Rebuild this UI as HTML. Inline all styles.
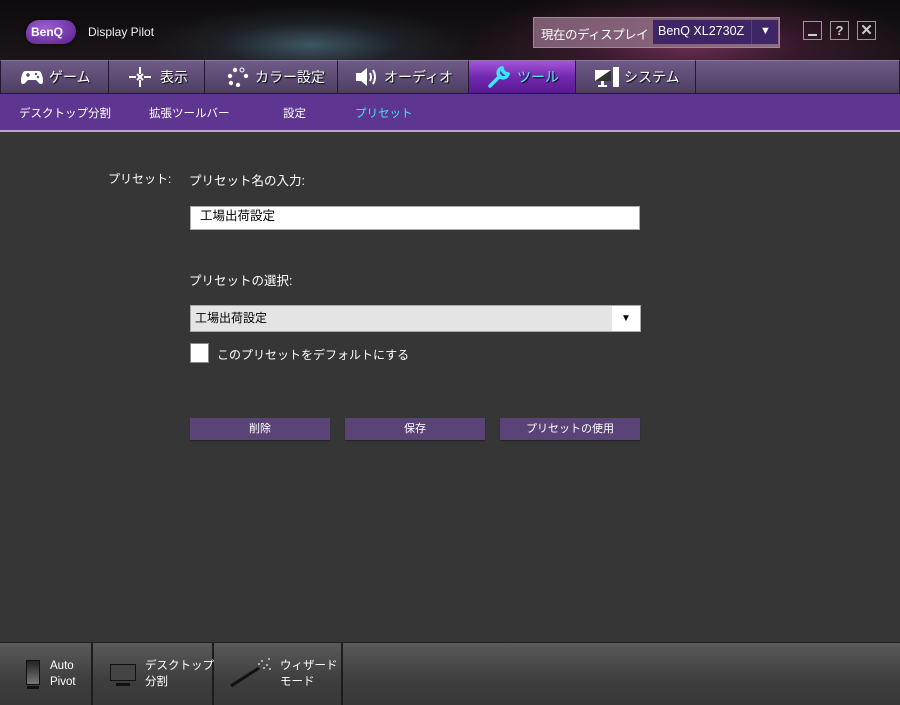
<!DOCTYPE html>
<html><head><meta charset="utf-8"><style>
*{margin:0;padding:0;box-sizing:border-box}
body{width:900px;height:705px;overflow:hidden;background:#363636;font-family:"Liberation Sans","Noto Sans CJK JP",sans-serif;color:#fff;position:relative}
.abs{position:absolute;white-space:nowrap}
#hdr{left:0;top:0;width:900px;height:60px;background:radial-gradient(ellipse 220px 60px at 690px 45px,#6a2d52 0%,rgba(80,30,60,.5) 50%,rgba(0,0,0,0) 100%),radial-gradient(ellipse 160px 40px at 310px 45px,#3d5563 0%,rgba(40,55,65,.4) 55%,rgba(0,0,0,0) 100%),linear-gradient(#0d0b0d,#1c1519)}
.tab{top:60px;height:34px;background:linear-gradient(#6e5b86,#4d3d63);border:1px solid #24182f;border-top:1px solid #8a78a0;font-size:14px;display:flex;align-items:center;color:#fff;text-shadow:1px 1px 1px #000}
.tab.act{background:linear-gradient(#a455d6,#7128b0 50%,#5a1a8e);color:#4ef0ff}
#sub{left:0;top:94px;width:900px;height:38px;background:#5e3590;border-bottom:2px solid #b9a4da;font-size:11.5px}
#sub span{position:absolute;top:11px}
.btn{top:418px;height:22px;width:140px;background:#5a4377;font-size:11px;text-align:center;line-height:22px;box-shadow:0 1px 1px #222}
#bot{left:0;top:642px;width:900px;height:63px;background:linear-gradient(#5a5a5a,#3e3e3e 60%,#383838);border-top:1px solid #222}
.seg{top:643px;height:62px;border-right:2px solid #1c1c1c;font-size:11.5px;line-height:16px}
</style></head><body>
<div id="hdr" class="abs"></div>
<div class="abs" style="left:26px;top:20px;width:50px;height:24px;border-radius:14px 12px 14px 10px;background:radial-gradient(ellipse at 40% 30%,#9a5ed0,#5a1e8e);box-shadow:0 0 3px #000"></div>
<div class="abs" style="left:31px;top:25px;font-size:12px;font-weight:bold;color:#fff">BenQ</div>
<div class="abs" style="left:88px;top:25px;font-size:12px;color:#eee">Display Pilot</div>
<div class="abs" style="left:533px;top:17px;width:247px;height:31px;background:linear-gradient(90deg,#7c5a70,#8e6a80);border:1px solid #9a8a96"></div>
<div class="abs" style="left:541px;top:24px;font-size:12.5px;letter-spacing:-0.5px;color:#fff">現在のディスプレイ</div>
<div class="abs" style="left:653px;top:20px;width:125px;height:24px;background:#3d2566"></div>
<div class="abs" style="left:751px;top:20px;width:1px;height:24px;background:#55407a"></div>
<div class="abs" style="left:658px;top:24px;font-size:12.5px">BenQ XL2730Z</div>
<div class="abs" style="left:760px;top:25px;font-size:11px">▼</div>
<div class="abs" style="left:803px;top:21px;width:19px;height:19px;border:1px solid #999;"><div class="abs" style="left:4px;top:12px;width:9px;height:2px;background:#ccc"></div></div>
<div class="abs" style="left:830px;top:21px;width:19px;height:19px;border:1px solid #999;font-size:13px;font-weight:bold;text-align:center;color:#ccc;line-height:17px">?</div>
<div class="abs" style="left:857px;top:21px;width:19px;height:19px;border:1px solid #999;font-size:15px;font-weight:bold;text-align:center;color:#ccc;line-height:17px">✕</div>

<div class="abs tab" style="left:0;width:109px;padding-left:20px"><svg width="22" height="18" viewBox="0 0 22 18"><path d="M4 3h14c2 0 4 5 4 10 0 4-3 4-5 1l-2-2H7l-2 2c-2 3-5 3-5-1 0-5 2-10 4-10z" fill="#fff"/><path d="M5 7h4M7 5v4" stroke="#555" stroke-width="1.6"/><circle cx="15" cy="6" r="1.2" fill="#555"/><circle cx="17" cy="9" r="1.2" fill="#555"/></svg><span style="margin-left:6px">ゲーム</span></div>
<div class="abs tab" style="left:108px;width:97px;padding-left:19px"><svg width="24" height="22"><g stroke="#fff" stroke-width="2" fill="none"><path d="M12 1v7M12 14v7M1 11h7M16 11h7M9 8l3 3 3-3M9 14l3-3 3 3"/></g></svg><span style="margin-left:8px">表示</span></div>
<div class="abs tab" style="left:204px;width:134px;padding-left:22px"><svg width="22" height="20"><g fill="#fff"><circle cx="8" cy="3" r="2.2"/><circle cx="15" cy="3" r="2" fill="none" stroke="#fff"/><circle cx="3" cy="9" r="2.2"/><circle cx="19" cy="9" r="2.2"/><circle cx="4" cy="16" r="2.2"/><circle cx="11" cy="18" r="2.2"/></g></svg><span style="margin-left:6px">カラー設定</span></div>
<div class="abs tab" style="left:337px;width:132px;padding-left:17px"><svg width="24" height="20"><path d="M1 6h5l6-5v18l-6-5H1z" fill="#fff"/><path d="M15 6q2 4 0 8M18 3q4 7 0 14" stroke="#fff" stroke-width="2" fill="none"/></svg><span style="margin-left:5px">オーディオ</span></div>
<div class="abs tab act" style="left:468px;width:108px;padding-left:18px"><svg width="24" height="22"><path d="M3 20l10-10M15 2a5 5 0 1 0 6 6l-3-1-2-2z" stroke="#3de8ff" stroke-width="3.5" fill="none" stroke-linecap="round"/></svg><span style="margin-left:6px">ツール</span></div>
<div class="abs tab" style="left:575px;width:121px;padding-left:18px"><svg width="26" height="22"><path d="M1 4h16v11H1z" fill="#fff"/><path d="M1 15L17 4v11z" fill="#333"/><rect x="7" y="15" width="3" height="4" fill="#fff"/><rect x="4" y="19" width="9" height="2" fill="#fff"/><rect x="19" y="1" width="6" height="20" fill="#fff"/></svg><span style="margin-left:4px">システム</span></div>
<div class="abs tab" style="left:695px;width:205px"></div>

<div id="sub" class="abs"><span style="left:19px">デスクトップ分割</span><span style="left:149px">拡張ツールバー</span><span style="left:283px">設定</span><span style="left:355px;color:#3de8ff">プリセット</span></div>

<div class="abs" style="left:108px;top:170px;font-size:12px">プリセット:</div>
<div class="abs" style="left:189px;top:170px;font-size:12.5px">プリセット名の入力:</div>
<div class="abs" style="left:190px;top:206px;width:450px;height:24px;background:#fff;border:1px solid #aaa;color:#000;font-size:12.5px;padding:0 9px;line-height:18px">工場出荷設定</div>
<div class="abs" style="left:189px;top:270px;font-size:12.5px">プリセットの選択:</div>
<div class="abs" style="left:190px;top:305px;width:451px;height:27px;background:#e4e4e4;border:1px solid #aaa;color:#000;font-size:12px;padding:0 4px;line-height:24px">工場出荷設定</div>
<div class="abs" style="left:612px;top:306px;width:28px;height:25px;background:#fff;color:#000;font-size:10px;text-align:center;line-height:25px">▼</div>
<div class="abs" style="left:190px;top:343px;width:19px;height:20px;background:#fff;border:1px solid #888"></div>
<div class="abs" style="left:217px;top:346px;font-size:12px">このプリセットをデフォルトにする</div>
<div class="abs btn" style="left:190px">削除</div>
<div class="abs btn" style="left:345px">保存</div>
<div class="abs btn" style="left:500px">プリセットの使用</div>

<div id="bot" class="abs"></div>
<div class="abs seg" style="left:0;width:93px"><div class="abs" style="left:26px;top:17px;width:14px;height:25px;border:1px solid #111;background:linear-gradient(#222,#777)"></div><div class="abs" style="left:27px;top:43px;width:12px;height:3px;background:#111"></div><div class="abs" style="left:50px;top:15px">Auto<br>Pivot</div></div>
<div class="abs seg" style="left:93px;width:121px"><div class="abs" style="left:17px;top:21px;width:26px;height:17px;border:1px solid #111;background:#444"></div><div class="abs" style="left:23px;top:40px;width:14px;height:3px;background:#111"></div><div class="abs" style="left:52px;top:15px">デスクトップ<br>分割</div></div>
<div class="abs seg" style="left:214px;width:129px"><svg class="abs" style="left:15px;top:10px" width="45" height="35"><path d="M2 33L30 15" stroke="#111" stroke-width="3"/><g fill="#ccc"><circle cx="33" cy="8" r="1"/><circle cx="38" cy="12" r="1"/><circle cx="35" cy="15" r="1"/><circle cx="40" cy="6" r="1"/><circle cx="30" cy="11" r="1"/><circle cx="41" cy="16" r="1"/></g></svg><div class="abs" style="left:66px;top:15px">ウィザード<br>モード</div></div>
</body></html>
